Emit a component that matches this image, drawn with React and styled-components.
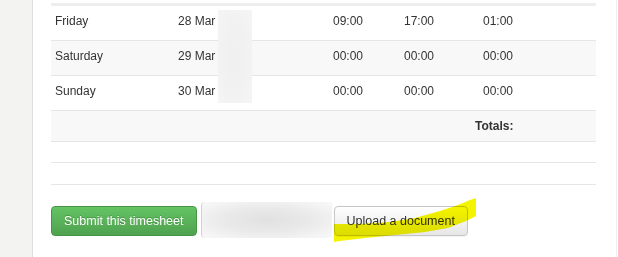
import React from "react";
import styled, { createGlobalStyle } from "styled-components";

const Global = createGlobalStyle`
  html, body { margin: 0; padding: 0; background: #fff; }
  body { font-family: "Liberation Sans", Arial, sans-serif; color: #333; }
`;

const Shell = styled.div`
  position: relative;
  display: flex;
  width: 618px;
  height: 257px;
  overflow: hidden;
`;

const Sidebar = styled.div`
  width: 32px;
  flex: none;
  background: #f3f3f2;
  border-right: 1px solid #dedede;
`;

const Main = styled.div`
  width: 584px;
  flex: none;
  box-sizing: border-box;
  padding: 3px 21px 0 18px;
  border-right: 1px solid #efefef;
`;

const Table = styled.div`
  position: relative;
  width: 545px;
`;

const TopBand = styled.div`
  height: 3px;
  background: #eeeeee;
`;

const Row = styled.div`
  display: grid;
  grid-template-columns: 123px 155px 71px 79px 1fr;
  box-sizing: border-box;
  height: ${(p) => p.$h}px;
  background: ${(p) => (p.$striped ? "#f8f8f8" : "#fff")};
  border-bottom: 1px solid #e6e6e6;
`;

const Cell = styled.div`
  font-size: 12px;
  line-height: 18px;
  padding: 6px 0 0 ${(p) => (p.$shift ? 0 : 4)}px;
  margin-left: ${(p) => (p.$shift ? -4 : 0)}px;
  font-weight: ${(p) => (p.$bold ? 700 : 400)};
  color: #333;
  white-space: nowrap;
`;

const Redact = styled.div`
  position: absolute;
  left: 167px;
  top: 7px;
  width: 34px;
  height: 93px;
  background: radial-gradient(ellipse at 50% 50%, #efefef 0%, #f2f2f2 60%, #f5f5f5 100%);
`;

const ButtonBar = styled.div`
  display: flex;
  align-items: flex-start;
  width: 545px;
  padding: 21px 0 20px;
  border-bottom: 1px solid #e6e6e6;
`;

const Button = styled.button`
  box-sizing: border-box;
  height: 30px;
  padding: 0 12px;
  margin: 0 ${(p) => p.$mr || 0}px 0 0;
  border-radius: 4px;
  font-family: "Liberation Sans", Arial, sans-serif;
  font-size: 12.5px;
  line-height: 28px;
  cursor: pointer;
  ${(p) =>
    p.$variant === "success"
      ? `
    color: #fff;
    background: linear-gradient(#64c364, #4fa24f);
    border: 1px solid #479447;
    text-shadow: 0 -1px 0 rgba(0,0,0,0.2);
  `
      : `
    color: #333;
    background: linear-gradient(#ffffff, #e6e6e6);
    border: 1px solid #c6c6c6;
    box-shadow: 0 1px 1px rgba(0,0,0,0.05);
  `}
`;

const BlurBlock = styled.div`
  box-sizing: border-box;
  width: 131px;
  height: 36px;
  margin: -4px 2px 0 0;
  border-left: 1px solid #d2d2d2;
  border-radius: 4px 0 0 4px;
  background: radial-gradient(ellipse at 50% 50%, #e1e1e1 0%, #e9e9e9 45%, #f5f5f5 85%, #f8f8f8 100%);
`;

const Highlight = styled.svg`
  position: absolute;
  left: 330px;
  top: 195px;
  mix-blend-mode: multiply;
  pointer-events: none;
`;

const days = [
  { day: "Friday", date: "28 Mar", t: ["09:00", "17:00", "01:00"] },
  { day: "Saturday", date: "29 Mar", t: ["00:00", "00:00", "00:00"], striped: true },
  { day: "Sunday", date: "30 Mar", t: ["00:00", "00:00", "00:00"] },
];

export default function App() {
  return (
    <>
      <Global />
      <Shell>
        <Sidebar />
        <Main>
          <Table>
            <TopBand />
            {days.map((d) => (
              <Row key={d.day} $h={35} $striped={d.striped}>
                <Cell>{d.day}</Cell>
                <Cell>{d.date}</Cell>
                {d.t.map((x, i) => (
                  <Cell key={i}>{x}</Cell>
                ))}
              </Row>
            ))}
            <Row $h={31} $striped>
              <Cell />
              <Cell />
              <Cell />
              <Cell />
              <Cell $bold $shift>
                Totals:
              </Cell>
            </Row>
            <Row $h={21} />
            <Row $h={22} />
            <Redact />
          </Table>
          <ButtonBar>
            <Button $variant="success" $mr={4}>
              Submit this timesheet
            </Button>
            <BlurBlock />
            <Button>Upload a document</Button>
          </ButtonBar>
        </Main>
        <Highlight width="150" height="50" viewBox="0 0 150 50">
          <polygon
            fill="#f4f400"
            points="4,29 30,29 60,27 85,23 110,16 128,10 140,5 146,3 146,21 136,26 118,33 95,37 65,40 35,43 10,46 4,47"
          />
        </Highlight>
      </Shell>
    </>
  );
}
